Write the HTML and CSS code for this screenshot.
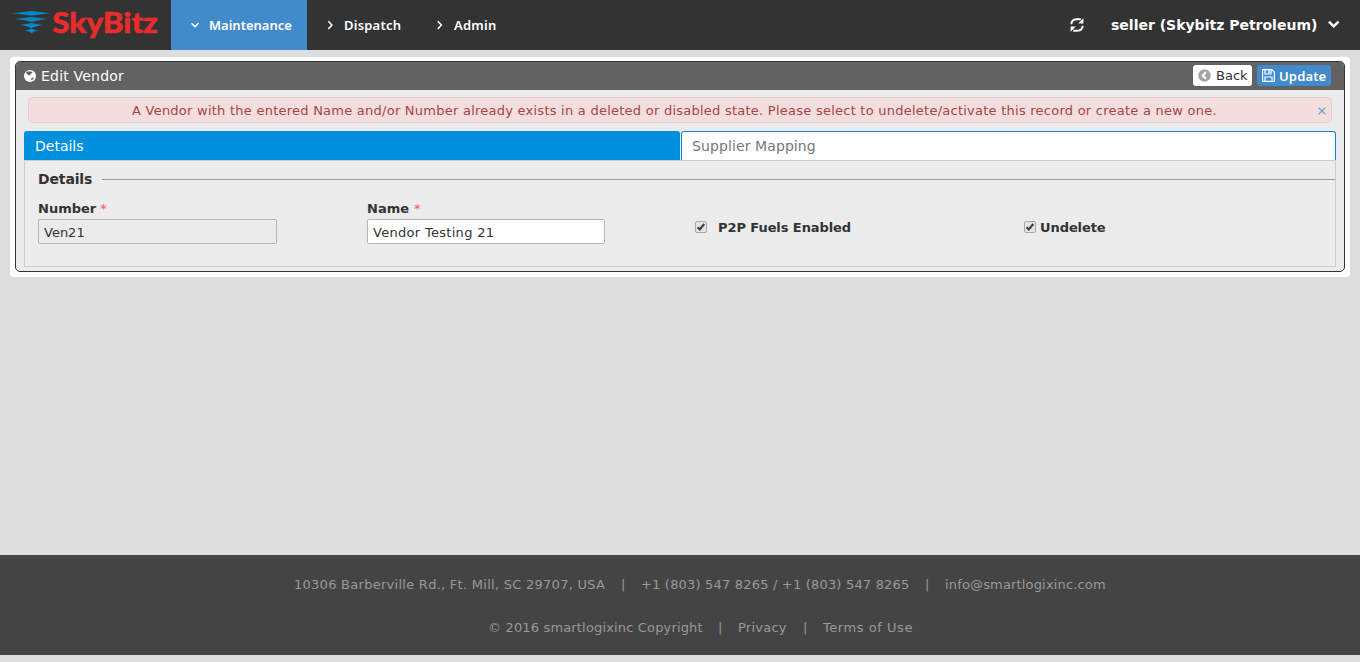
FILE: index.html
```html
<!DOCTYPE html>
<html lang="en">
<head>
<meta charset="utf-8">
<title>Edit Vendor</title>
<link rel="stylesheet" href="styles.css">
</head>
<body>
<header class="topbar">
  <svg class="logo" width="171" height="50" viewBox="0 0 171 50">
    <g fill="#0089c8">
      <path d="M11 13.2Q24 11.8 31.5 10.9Q39 11.8 52 13.2Q39 14.2 31.5 15.7Q24 14.2 11 13.2Z"/>
      <path d="M15.5 19Q25 18 31.5 17.1Q38 18 47.5 19Q38 20 31.5 21.9Q25 20 15.5 19Z"/>
      <path d="M20 24.9Q27 24 31.5 22.9Q36 24 43 24.9Q36 26 31.5 27.9Q27 26 20 24.9Z"/>
      <path d="M25 30.6Q29 30 31.5 28.3Q34 30 38 30.6Q34 31.4 31.5 33.2Q29 31.4 25 30.6Z"/>
    </g>
    <text class="logo-text" x="52.3" y="32.8" textLength="105.5" lengthAdjust="spacingAndGlyphs">SkyBitz</text>
  </svg>
  <nav class="nav">
    <a class="nav-item active"><svg width="10" height="10" viewBox="0 0 10 10"><path d="M1.5 3.3 5 6.7 8.5 3.3"/></svg><span class="t-maint">Maintenance</span></a>
    <a class="nav-item dispatch"><svg width="10" height="10" viewBox="0 0 10 10"><path d="M3.3 1.2 6.9 5 3.3 9"/></svg><span class="t-disp">Dispatch</span></a>
    <a class="nav-item admin"><svg width="10" height="10" viewBox="0 0 10 10"><path d="M3.8 1.2 7.4 5 3.8 9"/></svg><span class="t-admin">Admin</span></a>
  </nav>
  <svg class="refresh" width="14" height="14" viewBox="0 0 14 14"><path d="M1.3 6.2C1.5 3 3.8 1.3 6.8 1.3H10.8M12.7 7.8C12.5 11 10.2 12.7 7.2 12.7H3.2" fill="none" stroke="#fff" stroke-width="2"/><path d="M13.4.2V5.6H8.2ZM.6 13.8V8.4H5.8Z" fill="#fff"/></svg>
  <span class="user"><span class="t-user">seller (Skybitz Petroleum)</span></span>
  <svg class="user-caret" width="12" height="10" viewBox="0 0 12 10"><path d="M.9 1.6 5.7 6.4 10.5 1.6"/></svg>
</header>

<main class="card">
  <section class="panel">
    <div class="panel-head">
      <svg class="globe" width="12" height="12" viewBox="0 0 12 12"><circle cx="6" cy="6" r="6" fill="#fff"/><path fill="#626262" d="M2.3 2 4.2 1.2 5.2 1.8 6.2 1.3 8.3 2 8.3 3 7.2 3.4 6.6 4.6 5.6 4.8 5.3 6 4.6 5.2 3.4 4.2 2.3 3.2ZM6.8 8.5 8.8 7.8 9.8 7 9.4 8.8 8.2 9.9 7.2 9.8Z"/></svg>
      <h1 class="t-title">Edit Vendor</h1>
      <button class="btn back"><svg width="13" height="13" viewBox="0 0 13 13"><circle cx="6.5" cy="6.5" r="6.2" fill="#a5a5a5"/><path d="M7.8 3.3 4.8 6.5 7.8 9.7" fill="none" stroke="#fff" stroke-width="2"/></svg><span class="t-back">Back</span></button>
      <button class="btn update"><svg width="13" height="13" viewBox="0 0 13 13" fill="none" stroke="#fff" stroke-width="1.2"><path d="M.6.6H9.8L12.4 3.2V12.4H.6ZM3 .6V5H9V.6M3 12.4V8H10V12.4"/><path d="M7 1.4V4.2" stroke-width="1.5"/></svg><span class="t-update">Update</span></button>
    </div>
    <div class="alert">
      <span class="t-alert">A Vendor with the entered Name and/or Number already exists in a deleted or disabled state. Please select to undelete/activate this record or create a new one.</span>
      <svg class="close" width="8" height="8" viewBox="0 0 8 8"><path d="M.6.6 7.4 7.4M7.4.6.6 7.4"/></svg>
    </div>
    <div class="tabs">
      <a class="tab selected"><span class="t-tab1">Details</span></a>
      <a class="tab"><span class="t-tab2">Supplier Mapping</span></a>
    </div>
    <div class="tab-body">
      <div class="legend"><h2 class="t-legend">Details</h2></div>
      <div class="fields">
        <div class="field"><label><b class="t-number">Number</b><i>*</i></label><div class="input disabled"><span class="t-ven">Ven21</span></div></div>
        <div class="field"><label><b class="t-name">Name</b><i class="name-star">*</i></label><div class="input name-input"><span class="t-vt">Vendor Testing 21</span></div></div>
        <div class="check p2p"><svg width="12" height="13" viewBox="0 0 12 13"><rect x=".5" y=".5" width="11" height="11" rx="1.5" fill="#e4e4e4" stroke="#a8a8a8"/><path d="M2.6 6.3 4.8 8.5 9.2 3" fill="none" stroke="#3c3c3c" stroke-width="2.1"/></svg><b class="t-p2p">P2P Fuels Enabled</b></div>
        <div class="check"><svg width="12" height="13" viewBox="0 0 12 13"><rect x=".5" y=".5" width="11" height="11" rx="1.5" fill="#e4e4e4" stroke="#a8a8a8"/><path d="M2.6 6.3 4.8 8.5 9.2 3" fill="none" stroke="#3c3c3c" stroke-width="2.1"/></svg><b class="t-und">Undelete</b></div>
      </div>
    </div>
  </section>
</main>

<footer class="footer">
  <div class="foot-row first"><span class="t-addr">10306 Barberville Rd., Ft. Mill, SC 29707, USA</span><em>|</em><span class="t-phone">+1 (803) 547 8265 / +1 (803) 547 8265</span><em>|</em><span class="t-mail">info@smartlogixinc.com</span></div>
  <div class="foot-row second"><span class="t-copy">© 2016 smartlogixinc Copyright</span><em>|</em><span class="t-priv">Privacy</span><em>|</em><span class="t-terms">Terms of Use</span></div>
</footer>
</body>
</html>
```
FILE: styles.css
```css
* { box-sizing: border-box; }
body {
  margin: 0;
  height: 662px;
  overflow: hidden;
  display: flex;
  flex-direction: column;
  background: #ddd;
  color: #333;
  font: 13px/18px Verdana, "DejaVu Sans", sans-serif;
  white-space: nowrap;
}
svg { display: block; flex: none; }
h1, h2 { margin: 0; font-weight: normal; }

.topbar { display: flex; align-items: center; height: 50px; background: #333; color: #fff; flex: none; }
.logo-text { font: 900 28.5px Lato, sans-serif; fill: #e82c2e; stroke: #e82c2e; stroke-width: .5; }
.nav { display: flex; align-self: stretch; font: 600 13px/18px "Noto Sans", sans-serif; }
.nav-item { display: flex; align-items: center; gap: 9px; }
.nav-item svg { fill: none; stroke: #fff; stroke-width: 1.5; }
.nav-item.active { width: 136px; padding-left: 19px; background: #428bca; }
.nav-item.dispatch { width: 110px; padding-left: 18px; }
.nav-item.admin { width: 90px; padding-left: 17px; gap: 10px; }
.t-disp, .t-admin { letter-spacing: .22px; }
.refresh { margin-left: auto; }
.user { width: 208px; margin-left: 27px; font-weight: bold; font-size: 14px; }
.user-caret { margin: 0 20px 0 9px; fill: none; stroke: #fff; stroke-width: 2.4; }

.card { margin: 7px 10px 0; height: 220px; padding: 4px 5px 5px; background: #fff; border-radius: 4px; flex: none; }
.panel { height: 211px; border: 1px solid #333; border-radius: 5px; background: #ececec; overflow: hidden; }
.panel-head { display: flex; align-items: center; height: 28px; padding: 0 13px 0 8px; background: #626262; color: #fff; }
.t-title { margin-left: 5px; font-size: 14px; letter-spacing: .2px; }
.btn { display: flex; align-items: center; gap: 5px; height: 21px; margin-bottom: 1px; padding: 0 5px; border: 0; border-radius: 3px; font: 13px/18px Verdana, "DejaVu Sans", sans-serif; }
.back { width: 59px; margin-left: auto; background: #fff; color: #333; }
.update { width: 74px; margin-left: 5px; background: #428bca; color: #fff; gap: 4px; }
.t-update { font: 600 13px/18px "Noto Sans", sans-serif; letter-spacing: .15px; }
.alert { display: flex; align-items: center; height: 26px; margin: 7px 12px 0; padding: 1px 5px 0 103px; border: 1px solid #ebccd1; border-radius: 4px; background: #f2dede; color: #a94442; }
.t-alert { letter-spacing: .245px; padding-top: 1px; }
.close { margin-left: auto; fill: none; stroke: #5a9bd5; stroke-width: 1.1; }
.tabs { display: grid; grid-template-columns: 656px 655px; gap: 1px; height: 29px; margin: 8px 8px 0; }
.tab { display: flex; align-items: center; padding-left: 10px; border: 1px solid #0a8bcb; border-bottom: 0; border-radius: 3px 3px 0 0; background: #fff; color: #777; font-size: 14px; }
.t-tab2 { letter-spacing: .1px; }
.tab.selected { background: #0090dd; border-color: #0090dd; color: #fff; }
.tab-body { height: 107px; margin: 0 8px; border: 1px solid #ccc; }
.legend { display: flex; align-items: center; height: 36px; padding-left: 13px; }
.legend::after { content: ""; flex: 1; height: 1px; margin-left: 10px; background: #999; }
.t-legend { font-size: 14px; font-weight: bold; letter-spacing: -.14px; }
.fields { display: grid; grid-template-columns: 329px 328px 329px 1fr; padding-left: 13px; }
.field label { display: flex; gap: 4px; height: 22px; padding-top: 2px; align-items: center; }
.field i { font-style: normal; color: #f5555a; }
.name-star { margin-left: 1px; }
.input { display: flex; align-items: center; width: 239px; height: 25px; padding: 2px 5px 0; border: 1px solid #b5b5b5; border-radius: 2px; background: #fff; }
.t-vt { letter-spacing: .3px; }
.name-input { width: 238px; }
.input.disabled { background: #ebebeb; }
.check { display: flex; align-items: center; height: 18px; margin-top: 21px; gap: 4px; }
.check b { padding-top: 2px; letter-spacing: -.08px; }
.p2p { gap: 11px; }

.footer { height: 100px; margin-top: auto; margin-bottom: 7px; background: #444; color: #999; flex: none; }
.foot-row { display: flex; }
.foot-row em { width: 5px; margin: 0 15px 0 16px; font-style: normal; }
.first { padding: 21px 0 0 294px; }
.second { padding: 25px 0 0 488px; }
.t-addr { width: 311px; letter-spacing: .27px; }
.t-phone { width: 268px; letter-spacing: .19px; }
.t-mail { letter-spacing: .16px; }
.t-copy { width: 214px; letter-spacing: .16px; }
.t-priv { width: 49px; letter-spacing: .25px; }
.t-terms { letter-spacing: .55px; }
```
